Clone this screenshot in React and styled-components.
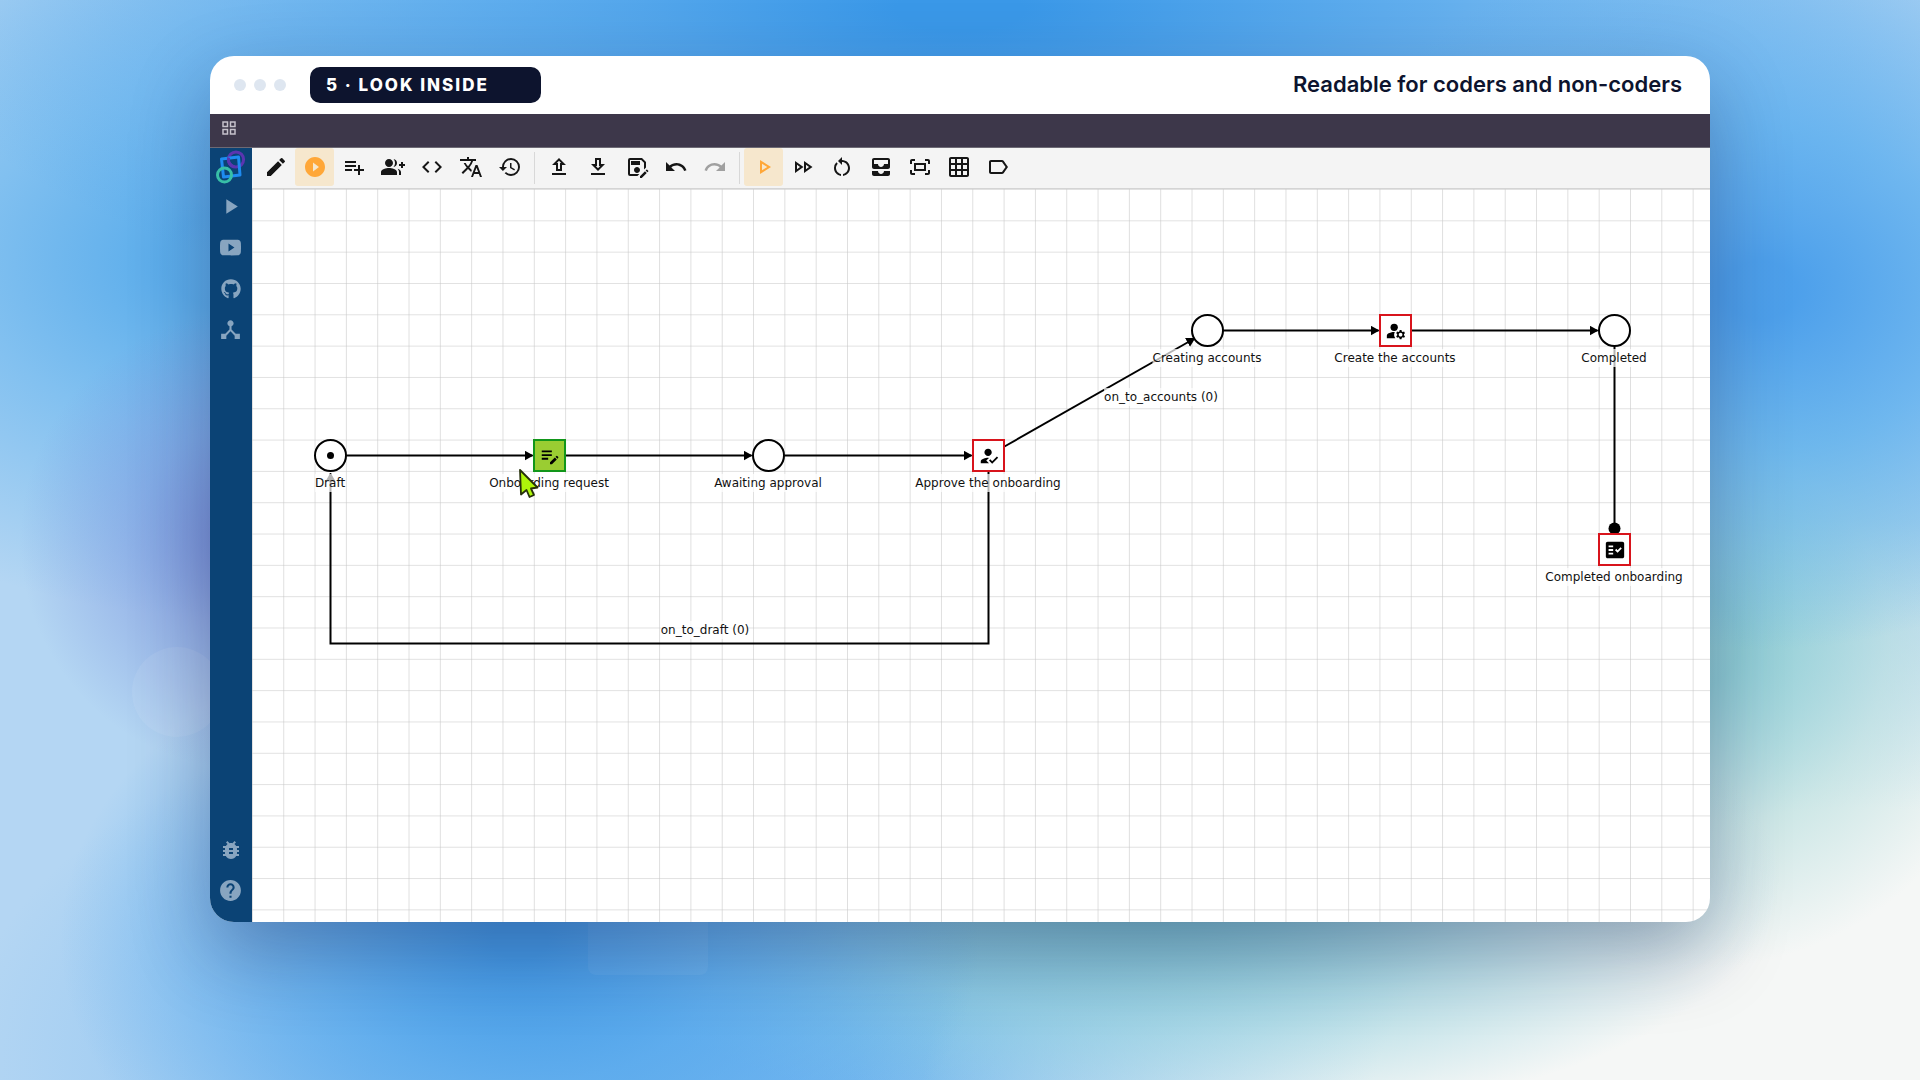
import React from 'react';
import styled, { createGlobalStyle } from 'styled-components';
import {
  MdEdit, MdPlayCircleFilled, MdPlaylistAdd, MdGroupAdd, MdCode, MdTranslate, MdHistory,
  MdOutlineUpload, MdOutlineDownload, MdOutlineSaveAs, MdUndo, MdRedo,
  MdOutlinePlayArrow, MdOutlineFastForward, MdRestartAlt, MdAllInbox,
  MdOutlineFitScreen, MdGridOn, MdLabelOutline, MdPlayArrow, MdDeviceHub, MdBugReport,
  MdHelp, MdOutlineGridView, MdEditNote, MdHowToReg, MdManageAccounts, MdFactCheck,
} from 'react-icons/md';
import { FaGithub } from 'react-icons/fa';
import { IoLogoYoutube } from 'react-icons/io5';

const GlobalStyle = createGlobalStyle`
  *, *::before, *::after { box-sizing: border-box; }
  body { margin: 0; font-family: "DejaVu Sans", Verdana, sans-serif; color: #111; }
  button { font: inherit; border: 0; padding: 0; margin: 0; background: none; cursor: pointer; }
  svg { display: block; flex: none; }
`;

const Page = styled.div`
  position: relative;
  isolation: isolate;
  overflow: hidden;
  display: flex;
  min-height: 100vh;
  padding: 56px 210px 158px;
  background:
    radial-gradient(230px 230px at 250px 540px, rgba(105, 122, 207, 0.8), rgba(115, 140, 218, 0.45) 50%, transparent),
    radial-gradient(460px 360px at 1760px 290px, rgba(66, 154, 234, 0.9) 8%, rgba(82, 170, 238, 0.7) 45%, transparent),
    radial-gradient(1060px 350px at 960px 10px, #3a98e8 6%, rgba(72, 162, 236, 0.75) 45%, transparent),
    radial-gradient(560px 360px at 250px 260px, rgba(76, 166, 234, 0.85) 15%, rgba(96, 178, 238, 0.6) 50%, transparent),
    radial-gradient(460px 320px at 520px 940px, #449be6 6%, rgba(86, 168, 236, 0.75) 45%, transparent),
    radial-gradient(620px 250px at 1160px 880px, rgba(118, 190, 206, 0.95) 15%, rgba(140, 205, 220, 0.65) 55%, transparent),
    radial-gradient(330px 330px at 1690px 640px, rgba(135, 203, 210, 0.9) 15%, rgba(165, 215, 215, 0.5) 60%, transparent),
    radial-gradient(940px 600px at 1860px 1120px, #f5f7f6 52%, transparent),
    radial-gradient(780px 400px at 740px 1060px, rgba(110, 180, 240, 0.9) 15%, transparent),
    #b4d6f3;
`;

const Blob = styled.span`
  position: absolute;
  z-index: -1;
  background: rgba(255, 255, 255, 0.08);
`;

const Disc = styled(Blob)`
  left: 132px;
  top: 647px;
  width: 90px;
  height: 90px;
  border-radius: 50%;
`;

const Tile = styled(Blob)`
  left: 588px;
  top: 855px;
  width: 120px;
  height: 120px;
  border-radius: 8px;
  background: rgba(255, 255, 255, 0.05);
`;

const Window = styled.main`
  flex: 1;
  min-width: 0;
  display: flex;
  flex-direction: column;
  overflow: hidden;
  border-radius: 24px;
  background: #fff;
  box-shadow: 0 30px 80px rgba(20, 22, 70, 0.33);
`;

const TitleBar = styled.header`
  display: flex;
  align-items: center;
  gap: 24px;
  height: 58px;
  padding: 0 28px 0 24px;
  color: #0d142e;
  font-family: Inter, sans-serif;
`;

const Dots = styled.div`
  display: flex;
  gap: 8px;
`;

const Dot = styled.span`
  width: 12px;
  height: 12px;
  border-radius: 50%;
  background: #dee6f0;
`;

const Step = styled.p`
  margin: 0;
  min-width: 231px;
  padding: 0 16px;
  border-radius: 10px;
  background: #0d142e;
  color: #fff;
  font-size: 17px;
  font-weight: 800;
  line-height: 36px;
  letter-spacing: 2px;
`;

const Title = styled.h1`
  margin: 0 0 0 auto;
  padding-bottom: 2px;
  font-size: 22px;
  font-weight: 600;
  line-height: 28px;
`;

const TopStrip = styled.div`
  display: flex;
  align-items: center;
  height: 34px;
  padding: 0 0 6px 10px;
  background: #3d374a;
  border-bottom: 1px solid #6d6a75;
  color: #c5c1cb;
`;

const Body = styled.div`
  flex: 1;
  display: flex;
  min-height: 0;
`;

const Sidebar = styled.nav`
  display: flex;
  flex-direction: column;
  width: 42px;
  padding-bottom: 11px;
  background: #0b4375;
`;

const Spacer = styled.span`
  flex: 1;
`;

const SideButton = styled.button`
  display: grid;
  place-items: center;
  width: 41px;
  height: ${(p) => (p.$logo ? 38 : 41)}px;
  color: #88a5c0;
`;

const Main = styled.section`
  flex: 1;
  min-width: 0;
  display: flex;
  flex-direction: column;
`;

const Toolbar = styled.div`
  display: flex;
  height: 41px;
  padding-left: 4px;
  background: #f4f4f4;
  border-bottom: 1px solid #d4d4d4;
`;

const ToolButton = styled.button`
  display: grid;
  place-items: center;
  width: 39px;
  height: 38px;
  border-radius: 3px;
  background: ${(p) => (p.$on ? '#f6e7cd' : 'transparent')};
  color: ${(p) => (p.$on ? '#ffa738' : '#161616')};
  &:disabled { color: #a0a0a0; }
`;

const Divider = styled.span`
  width: 1px;
  height: 32px;
  margin: 4px 4px 0 5px;
  background: #d8d8d8;
`;

const Canvas = styled.div`
  position: relative;
  flex: 1;
  min-height: 480px;
  overflow: hidden;
`;

const Wires = styled.svg`
  position: absolute;
  inset: 0;
  width: 100%;
  height: 100%;
`;

const Node = styled.button`
  position: absolute;
  left: ${(p) => p.$x - 16}px;
  top: ${(p) => p.$y - 16}px;
  width: 33px;
  height: 33px;
  display: grid;
  place-items: center;
  border: 2px solid ${(p) => p.$line};
  border-radius: ${(p) => (p.$round ? '50%' : '0')};
  background: ${(p) => p.$fill || '#fff'};
  color: #000;
`;

const Token = styled.span`
  width: 7px;
  height: 7px;
  border-radius: 50%;
  background: #000;
`;

const Caption = styled.span`
  position: absolute;
  left: ${(p) => p.$x}px;
  top: ${(p) => p.$y}px;
  transform: translate(-50%, -50%);
  background: rgba(255, 255, 255, 0.7);
  font-size: 12px;
  line-height: 18px;
  white-space: nowrap;
`;

const Pointer = styled.svg`
  position: absolute;
  left: 266px;
  top: 278px;
`;

const tools = [
  ['Edit', MdEdit], ['Run', MdPlayCircleFilled, 'on'], ['Add to list', MdPlaylistAdd], ['Roles', MdGroupAdd],
  ['Code', MdCode], ['Translate', MdTranslate], ['History', MdHistory], null,
  ['Upload', MdOutlineUpload], ['Download', MdOutlineDownload], ['Save as', MdOutlineSaveAs],
  ['Undo', MdUndo], ['Redo', MdRedo, 'off'], null,
  ['Play', MdOutlinePlayArrow, 'on'], ['Fast forward', MdOutlineFastForward], ['Restart', MdRestartAlt],
  ['Inbox', MdAllInbox], ['Fit to screen', MdOutlineFitScreen], ['Grid', MdGridOn], ['Labels', MdLabelOutline],
];

const nodes = [
  { x: 78, y: 266, label: 'Draft', token: true },
  { x: 297, y: 266, label: 'Onboarding request', icon: MdEditNote, line: '#12961a', fill: '#9acd32' },
  { x: 516, y: 266, label: 'Awaiting approval' },
  { x: 736, y: 266, label: 'Approve the onboarding', icon: MdHowToReg },
  { x: 955, y: 141, label: 'Creating accounts' },
  { x: 1143, y: 141, label: 'Create the accounts', icon: MdManageAccounts },
  { x: 1362, y: 141, label: 'Completed' },
  { x: 1362, y: 360, label: 'Completed onboarding', icon: MdFactCheck },
];

const wires = [
  'M94 266H280', 'M313 266H499', 'M532 266H719', 'M970 141H1126', 'M1159 141H1345',
  'M752 257L942 149', 'M736 282V454H78V284',
];

const Logo = () => (
  <svg width="30" height="34" viewBox="0 0 30 34" fill="none" aria-hidden="true">
    <circle cx="20" cy="9.500" r="7.600" stroke="#5b35b0" strokeWidth="3" />
    <path d="M5.500 9L22.500 7L24 25L7.500 27z" stroke="#1e8bf0" strokeWidth="3" strokeLinejoin="round" />
    <path d="M12.600 7.500a7.600 7.600 0 0 0 6 9.500" stroke="#5b35b0" strokeWidth="3" />
    <circle cx="8.500" cy="25" r="7" stroke="#38bfa7" strokeWidth="3" />
  </svg>
);

export default function App() {
  return (
    <>
      <GlobalStyle />
      <Page>
        <Disc />
        <Tile />
        <Window>
          <TitleBar>
            <Dots><Dot /><Dot /><Dot /></Dots>
            <Step>5 · LOOK INSIDE</Step>
            <Title>Readable for coders and non-coders</Title>
          </TitleBar>
          <TopStrip><MdOutlineGridView size={18} /></TopStrip>
          <Body>
            <Sidebar>
              <SideButton $logo aria-label="Home"><Logo /></SideButton>
              <SideButton aria-label="Start"><MdPlayArrow size={25} /></SideButton>
              <SideButton aria-label="Videos"><IoLogoYoutube size={21} /></SideButton>
              <SideButton aria-label="GitHub"><FaGithub size={20} /></SideButton>
              <SideButton aria-label="Processes"><MdDeviceHub size={25} /></SideButton>
              <Spacer />
              <SideButton aria-label="Report a bug"><MdBugReport size={24} /></SideButton>
              <SideButton aria-label="Help"><MdHelp size={25} /></SideButton>
            </Sidebar>
            <Main>
              <Toolbar>
                {tools.map((tool, i) => {
                  if (!tool) return <Divider key={i} />;
                  const [name, Icon, state] = tool;
                  return (
                    <ToolButton key={name} aria-label={name} $on={state === 'on'} disabled={state === 'off'}>
                      <Icon size={24} />
                    </ToolButton>
                  );
                })}
              </Toolbar>
              <Canvas>
                <Wires aria-hidden="true">
                  <defs>
                    <pattern id="grid" width="30" height="30" patternUnits="userSpaceOnUse" patternTransform="translate(0.9 1) scale(1.044)">
                      <path d="M0 30H30V0" fill="none" stroke="#c4c4c4" strokeWidth="1" />
                    </pattern>
                    <marker id="arrow" markerUnits="userSpaceOnUse" markerWidth="9" markerHeight="10" refX="8" refY="5" orient="auto">
                      <path d="M0 0L9 5L0 10z" />
                    </marker>
                  </defs>
                  <rect width="100%" height="100%" fill="url(#grid)" />
                  <g transform="translate(0.5 0.5)">
                    <g fill="none" stroke="#000" strokeWidth="2">
                      {wires.map((d) => <path key={d} d={d} markerEnd="url(#arrow)" />)}
                      <path d="M1362 157V340" />
                    </g>
                    <circle cx="1362" cy="339" r="6" />
                  </g>
                </Wires>
                {nodes.map(({ x, y, label, icon: Icon, line, fill, token }) => (
                  <React.Fragment key={label}>
                    <Node $x={x} $y={y} $round={!Icon} $line={line || (Icon ? '#d8141c' : '#000')} $fill={fill} aria-label={label}>
                      {Icon && <Icon size={22} />}
                      {token && <Token />}
                    </Node>
                    <Caption $x={x} $y={y + 28}>{label}</Caption>
                  </React.Fragment>
                ))}
                <Caption $x={909} $y={208}>on_to_accounts (0)</Caption>
                <Caption $x={453} $y={441}>on_to_draft (0)</Caption>
                <Pointer width="24" height="32" viewBox="0 0 24 32" aria-hidden="true">
                  <path d="M2 3L19.500 20.500L13 21.500L16 28L11.500 30L8.500 23L3 27.500z" fill="#aef60a" stroke="#26300a" strokeWidth="1.800" strokeLinejoin="round" />
                </Pointer>
              </Canvas>
            </Main>
          </Body>
        </Window>
      </Page>
    </>
  );
}
